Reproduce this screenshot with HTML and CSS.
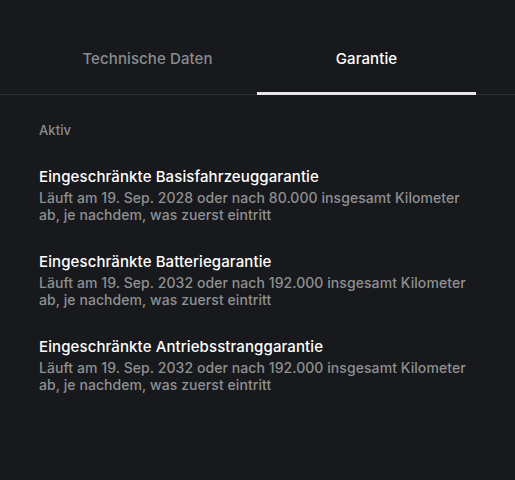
FILE: index.html
```html
<!DOCTYPE html>
<html lang="de">
<head>
    <meta charset="UTF-8">
    <meta name="viewport" content="width=device-width, initial-scale=1.0">
    <title>Garantie</title>
    <link rel="stylesheet" href="styles.css">
</head>
<body>
    <!-- Tabs -->
    <nav class="tabs">
        <div class="tab">Technische Daten</div>
        <div class="tab active">Garantie</div>
    </nav>

    <!-- Warranty list -->
    <main class="content">
        <h4 class="section-label">Aktiv</h4>

        <div class="warranty">
            <h3>Eingeschränkte Basisfahrzeuggarantie</h3>
            <p>Läuft am 19. Sep. 2028 oder nach 80.000 insgesamt Kilometer ab, je nachdem, was zuerst eintritt</p>
        </div>

        <div class="warranty">
            <h3>Eingeschränkte Batteriegarantie</h3>
            <p>Läuft am 19. Sep. 2032 oder nach 192.000 insgesamt Kilometer ab, je nachdem, was zuerst eintritt</p>
        </div>

        <div class="warranty">
            <h3>Eingeschränkte Antriebsstranggarantie</h3>
            <p>Läuft am 19. Sep. 2032 oder nach 192.000 insgesamt Kilometer ab, je nachdem, was zuerst eintritt</p>
        </div>
    </main>
</body>
</html>
```

FILE: styles.css
```css
/* General */
body {
    margin: 0;
    padding: 0;
    height: 480px;
    background-color: #17191c;
    font-family: Inter, "Noto Sans", sans-serif;
    color: #fff;
    letter-spacing: 0.1px;
}

/* Tabs */
.tabs {
    display: flex;
    padding: 0 39px 0 38px;
    height: 94px;
    border-bottom: 1px solid #2c2f33;
}

.tab {
    flex: 1;
    display: flex;
    align-items: center;
    justify-content: center;
    padding-top: 24px;
    font-size: 15px;
    font-weight: 500;
    color: #8b8c8e;
    border-bottom: 3px solid transparent;
    margin-bottom: -1px;
}

.tab.active {
    color: #fff;
    border-bottom-color: #e8e8e8;
}

/* Content */
.content {
    padding: 27px 39px 0;
}

.section-label {
    margin: 0 0 29px;
    font-size: 13px;
    font-weight: 500;
    color: #8b8c8e;
}

.warranty {
    margin-bottom: 29px;
}

.warranty h3 {
    margin: 0 0 2px;
    font-size: 15px;
    font-weight: 500;
    line-height: 20px;
    color: #fff;
}

.warranty p {
    margin: 0;
    font-size: 14px;
    font-weight: 500;
    line-height: 17px;
    letter-spacing: 0.07px;
    color: #8f9092;
}
```
